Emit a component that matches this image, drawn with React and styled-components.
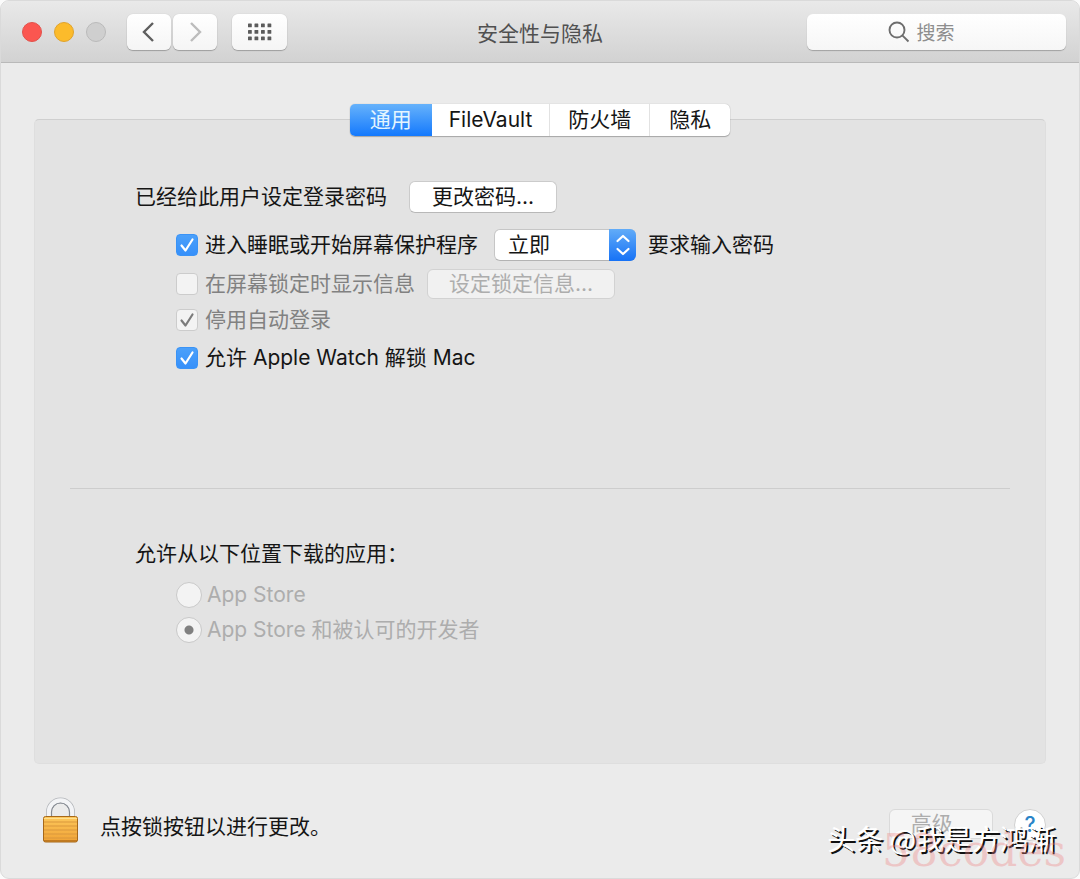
import React, { useState } from 'react';
import styled, { createGlobalStyle, css } from 'styled-components';

const GlobalStyle = createGlobalStyle`
    * {
        box-sizing: border-box;
    }
    body {
        margin: 0;
        background: #fbfbfb;
        color: #151515;
        font-family: Inter, "Noto Sans CJK SC", sans-serif;
        font-size: 21px;
        line-height: 26px;
    }
    button, input, select {
        margin: 0;
        font: inherit;
        color: inherit;
    }
`;

const Window = styled.div`
    position: relative;
    min-height: 100vh;
    overflow: hidden;
    display: flex;
    flex-direction: column;
    background: #ebebeb;
    border: 1px solid #dadada;
    border-radius: 9px;
`;

/* TITLE BAR */
const TitleBar = styled.header`
    display: grid;
    grid-template-columns: 1fr auto 1fr;
    align-items: center;
    height: 62px;
    padding: 0 13px;
    background: linear-gradient(#e9e9e9, #d2d2d2);
    border-bottom: 1px solid #b9b9b9;
`;

const BarLeft = styled.div`
    display: flex;
    align-items: center;
`;

const Lights = styled.div`
    display: flex;
    gap: 12px;
    margin: 0 19px 0 8px;
`;

const Light = styled.button`
    width: 20px;
    height: 20px;
    padding: 0;
    border-radius: 50%;
    background: ${props => props.$fill};
    border: 1px solid ${props => props.$edge};
`;

const BarButton = styled.button`
    display: grid;
    place-items: center;
    width: ${props => props.$wide ? '55px' : '44px'};
    height: 36px;
    padding: 0;
    margin-left: ${props => props.$wide ? '15px' : '2px'};
    border: 0;
    border-radius: 6px;
    background: linear-gradient(#ffffff, #f5f5f5);
    box-shadow: 0 1px 1px rgba(0,0,0,0.25), 0 0 1px rgba(0,0,0,0.2);
`;

const Title = styled.h1`
    margin: 4px 0 0;
    font-size: 21px;
    font-weight: 400;
    color: #505050;
`;

const SearchBox = styled.label`
    justify-self: end;
    display: flex;
    align-items: center;
    justify-content: center;
    gap: 6px;
    width: 259px;
    height: 36px;
    padding-right: 30px;
    border-radius: 6px;
    background: linear-gradient(#ffffff, #f6f6f6);
    box-shadow: 0 1px 1px rgba(0,0,0,0.25);
`;

const SearchInput = styled.input`
    field-sizing: content;
    max-width: 190px;
    padding: 0;
    border: 0;
    outline: 0;
    background: none;
    font-size: 19px;
    &::placeholder{
        color: #8e8e8e;
        opacity: 1;
    }
`;

/* PANEL */
const Panel = styled.main`
    display: flex;
    flex-direction: column;
    margin: 56px 33px 0;
    padding: 0 35px;
    background: #e3e3e3;
    border: 1px solid #dedede;
    border-top-color: #cfcfcf;
    border-radius: 5px;
`;

const Tabs = styled.div`
    align-self: center;
    display: flex;
    margin-top: -16px;
    border-radius: 5px;
    background: #ffffff;
    box-shadow: 0 1px 1px rgba(0,0,0,0.25), 0 0 1px rgba(0,0,0,0.3);
`;

const Tab = styled.button`
    height: 32px;
    padding: 0 ${props => props.$wide ? '17px' : '18px'};
    border: 0;
    border-right: 1px solid #e2e2e2;
    background: none;
    &:last-child{
        padding: 0 19px;
        border-right: 0;
    }
    ${props => props.$active && css`
        padding: 0 20px;
        border-right: 0;
        border-radius: 5px 0 0 5px;
        background: linear-gradient(#66b2fb, #1479fd);
        color: #e4f5ff;
    `}
`;

const Section = styled.section`
    padding: ${props => props.$low ? '52px 65px 120px' : '45px 65px 117px'};
    & + &{
        border-top: 1px solid #cdcdcd;
    }
`;

const Row = styled.div`
    display: flex;
    align-items: center;
    min-height: ${props => props.$tall ? '32px' : '26px'};
    margin-top: ${props => props.$space || 0}px;
    padding-left: ${props => props.$indent ? '41px' : 0};
`;

const PushButton = styled.button`
    height: 32px;
    padding: 0 22px;
    margin-left: ${props => props.$gap || 0}px;
    border: 1px solid #cbcbcb;
    border-bottom-color: #b8b8b8;
    border-radius: 6px;
    background: #ffffff;
    white-space: nowrap;
    &:disabled{
        height: 30px;
        padding: 0 21px;
        border-color: #d2d2d2;
        background: #f1f1f1;
        color: #adadad;
    }
`;

const Option = styled.label`
    display: flex;
    align-items: center;
    gap: ${props => props.$radio ? '5px' : '7px'};
    color: ${props => props.$radio ? '#adadad' : props.$dim ? '#818181' : 'inherit'};
`;

/* the mark shares one grid cell with the native input */
const Stack = styled.span`
    display: grid;
    align-items: center;
    & > *{
        grid-area: 1 / 1;
    }
    & > svg{
        pointer-events: none;
        place-self: center;
    }
`;

const CheckInput = styled.input`
    appearance: none;
    width: 22px;
    height: 22px;
    border: 1px solid #cccccc;
    border-radius: 4px;
    background: #f3f3f3;
    &:checked:enabled{
        border-color: #3a93f6;
        background: linear-gradient(#4ba0fa, #3690fa);
    }
`;

const RadioInput = styled.input`
    appearance: none;
    width: 26px;
    height: 26px;
    border: 1px solid #c9c9c9;
    border-radius: 50%;
    background: #f3f3f3;
    &:checked{
        background: radial-gradient(circle, #808080 4px, #f3f3f3 5px);
    }
`;

const Select = styled.select`
    appearance: none;
    width: 142px;
    height: 32px;
    padding: 0 13px;
    border: 1px solid #c6c6c6;
    border-bottom-color: #b3b3b3;
    border-radius: 6px;
    background: #ffffff;
`;

const SelectCap = styled.span`
    justify-self: end;
    display: grid;
    place-items: center;
    width: 27px;
    height: 32px;
    border-radius: 0 6px 6px 0;
    background: linear-gradient(#62acf8, #1672f6);
    pointer-events: none;
`;

const SelectWrap = styled(Stack)`
    margin: 0 12px 0 16px;
`;

/* FOOTER */
const Footer = styled.footer`
    display: flex;
    align-items: flex-start;
    padding: 32px 33px 30px 41px;
`;

const LockButton = styled.button`
    display: flex;
    padding: 0;
    border: 0;
    background: none;
`;

const FootText = styled.span`
    flex: 1;
    margin: 18px 0 0 21px;
`;

const FootButtons = styled.div`
    display: flex;
    gap: 21px;
    margin-top: 13px;
`;

const Advanced = styled(PushButton)`
    &:disabled{
        border-color: #dadada;
        background: #f5f5f5;
    }
`;

const Help = styled.button`
    width: 32px;
    height: 32px;
    padding: 0;
    border: 1px solid #d0d0d0;
    border-radius: 50%;
    background: #ffffff;
    color: #2a84c8;
    font-size: 21px;
    font-weight: 500;
`;

const Credit = styled.div`
    position: absolute;
    right: 23px;
    bottom: 22px;
    color: #ffffff;
    font-family: "Noto Sans CJK SC", sans-serif;
    font-size: 28px;
    line-height: 36px;
    text-shadow: 2px 2px 0 #111111;
    white-space: nowrap;
    pointer-events: none;
`;

const SiteMark = styled.div`
    position: absolute;
    right: 13px;
    bottom: 3px;
    color: rgba(240,130,130,0.34);
    font-family: "DejaVu Serif", serif;
    font-size: 44px;
    line-height: 48px;
    pointer-events: none;
`;

const CheckMark = ({ color }) => (
    <svg width="22" height="22" viewBox="0 0 22 22" fill="none" stroke={color} strokeWidth="2.2" strokeLinecap="round" strokeLinejoin="round">
        <path d="M5.5 11.5L9.5 16.5L16.5 5.5"/>
    </svg>
)

const Chevron = ({ d, color }) => (
    <svg width="22" height="24" viewBox="0 0 22 24" fill="none" stroke={color} strokeWidth="2.4">
        <path d={d}/>
    </svg>
)

const GridIcon = () => (
    <svg width="24" height="18" viewBox="0 0 24 18" fill="#5c5c5c">
        {[0, 1, 2].map(row => [0, 1, 2, 3].map(col => (
            <rect key={row + '-' + col} x={col * 6.5} y={row * 6.5 + 0.5} width="3.8" height="3.8" rx="0.6"/>
        )))}
    </svg>
)

const LockIcon = () => (
    <svg width="37" height="48" viewBox="0 0 37 48">
        <defs>
            <linearGradient id="lockBody" x1="0" y1="0" x2="0" y2="1">
                <stop offset="0" stopColor="#fdc85c"/>
                <stop offset="1" stopColor="#f0a235"/>
            </linearGradient>
        </defs>
        <path d="M7 24V16a11.5 11.5 0 0 1 23 0v8" fill="none" stroke="#b4b7bb" strokeWidth="6"/>
        <path d="M7 24V16a11.5 11.5 0 0 1 23 0v8" fill="none" stroke="#f3f4f6" strokeWidth="4.4"/>
        <path d="M9.5 22V16a9 9 0 0 1 18 0v6" fill="none" stroke="#858a92" strokeWidth="1.2"/>
        <rect x="1.5" y="20.5" width="34" height="25.5" rx="2" fill="url(#lockBody)" stroke="#a76818"/>
        {[26, 30, 34, 38, 42].map(y => (
            <path key={y} d={`M2 ${y}H35`} stroke="#d9983c" strokeWidth="1.1"/>
        ))}
        <path d="M2 22.5H35" stroke="#ffe08f" strokeWidth="1"/>
        <path d="M2 44.8H35" stroke="#b06c1a" strokeWidth="1.2"/>
    </svg>
)

const CheckOption = ({ children, color = '#ffffff', dim, ...input }) => (
    <Option $dim={dim}>
        <Stack>
            <CheckInput type="checkbox" disabled={dim} {...input}/>
            {input.checked && <CheckMark color={color}/>}
        </Stack>
        {children}
    </Option>
)

const tabNames = ['通用', 'FileVault', '防火墙', '隐私'];

const App = () => {
    const [sleepLock, setSleepLock] = useState(true);
    const [watch, setWatch] = useState(true);

    return(
        <>
            <GlobalStyle/>
            <Window>
                <TitleBar>
                    <BarLeft>
                        <Lights>
                            <Light aria-label="关闭" $fill="#fb5650" $edge="#e2514b"/>
                            <Light aria-label="最小化" $fill="#fcbb2b" $edge="#e0a32c"/>
                            <Light aria-label="缩放" disabled $fill="#cfcfcf" $edge="#bababa"/>
                        </Lights>
                        <BarButton aria-label="后退"><Chevron d="M15 3L6 12L15 21" color="#5f5f5f"/></BarButton>
                        <BarButton aria-label="前进"><Chevron d="M7 3L16 12L7 21" color="#bcbcbc"/></BarButton>
                        <BarButton aria-label="显示全部" $wide><GridIcon/></BarButton>
                    </BarLeft>
                    <Title>安全性与隐私</Title>
                    <SearchBox>
                        <svg width="22" height="22" viewBox="0 0 22 22" fill="none" stroke="#6e6e6e" strokeWidth="1.9">
                            <circle cx="9" cy="9" r="7.5"/>
                            <path d="M14.3 14.3L20.5 20.5"/>
                        </svg>
                        <SearchInput type="text" placeholder="搜索" aria-label="搜索"/>
                    </SearchBox>
                </TitleBar>

                <Panel>
                    <Tabs role="tablist">
                        {tabNames.map((name, i) => (
                            <Tab key={name} role="tab" aria-selected={i === 0} $active={i === 0} $wide={i === 1}>{name}</Tab>
                        ))}
                    </Tabs>

                    <Section>
                        <Row $tall>
                            已经给此用户设定登录密码
                            <PushButton $gap={22}>更改密码...</PushButton>
                        </Row>
                        <Row $tall $indent $space={16}>
                            <CheckOption checked={sleepLock} onChange={e => setSleepLock(e.target.checked)}>进入睡眠或开始屏幕保护程序</CheckOption>
                            <SelectWrap>
                                <Select aria-label="要求输入密码的时间">
                                    <option>立即</option>
                                </Select>
                                <SelectCap>
                                    <svg width="16" height="24" viewBox="0 0 16 24" fill="none" stroke="#ffffff" strokeWidth="2.2" strokeLinecap="round" strokeLinejoin="round">
                                        <path d="M2.5 8L8 3L13.5 8M2.5 16L8 21L13.5 16"/>
                                    </svg>
                                </SelectCap>
                            </SelectWrap>
                            要求输入密码
                        </Row>
                        <Row $indent $space={8}>
                            <CheckOption dim checked={false} readOnly>在屏幕锁定时显示信息</CheckOption>
                            <PushButton disabled $gap={12}>设定锁定信息...</PushButton>
                        </Row>
                        <Row $indent $space={8}>
                            <CheckOption dim checked readOnly color="#7b7b7b">停用自动登录</CheckOption>
                        </Row>
                        <Row $indent $space={12}>
                            <CheckOption checked={watch} onChange={e => setWatch(e.target.checked)}>允许 Apple Watch 解锁 Mac</CheckOption>
                        </Row>
                    </Section>

                    <Section $low>
                        <Row>允许从以下位置下载的应用：</Row>
                        <Row $indent $space={15}>
                            <Option $radio><RadioInput type="radio" name="source" disabled/>App Store</Option>
                        </Row>
                        <Row $indent $space={9}>
                            <Option $radio><RadioInput type="radio" name="source" disabled defaultChecked/>App Store 和被认可的开发者</Option>
                        </Row>
                    </Section>
                </Panel>

                <Footer>
                    <LockButton aria-label="锁"><LockIcon/></LockButton>
                    <FootText>点按锁按钮以进行更改。</FootText>
                    <FootButtons>
                        <Advanced disabled>高级...</Advanced>
                        <Help aria-label="帮助">?</Help>
                    </FootButtons>
                </Footer>

                <Credit>头条 @我是方鸿渐</Credit>
                <SiteMark>58codes</SiteMark>
            </Window>
        </>
    )
}

export default App;
